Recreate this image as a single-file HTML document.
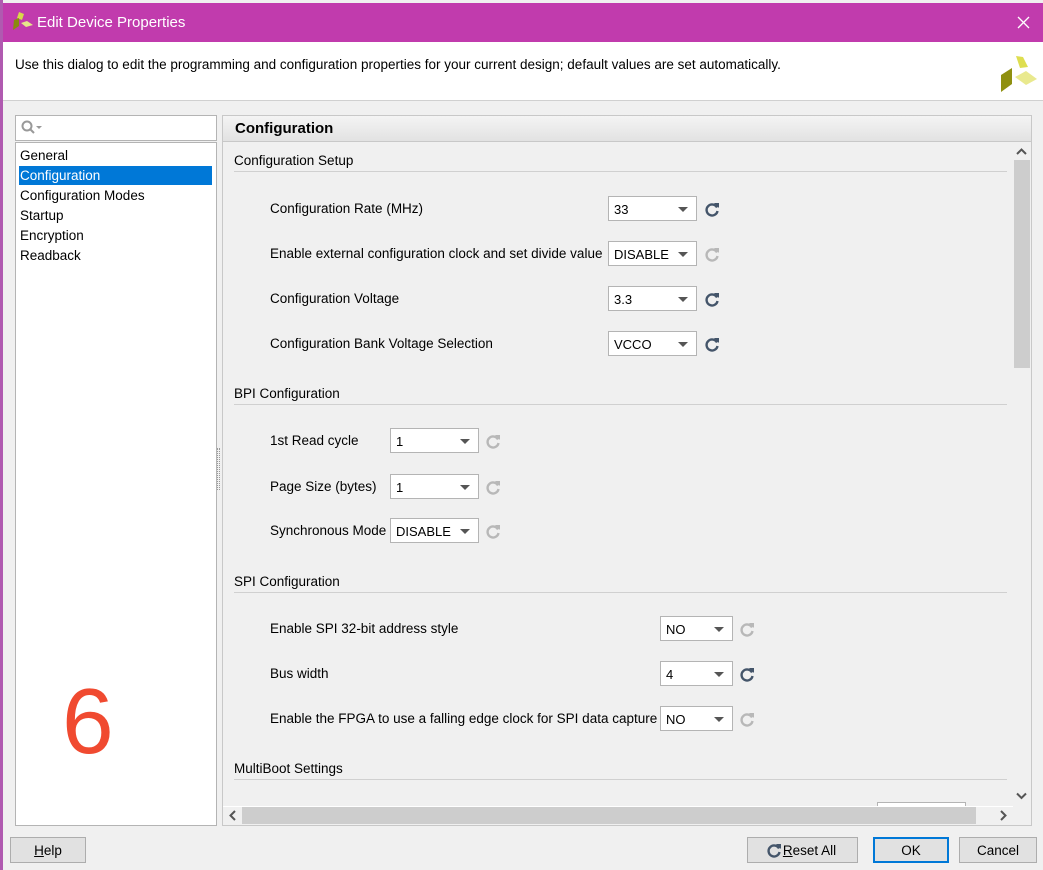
<!DOCTYPE html>
<html><head><meta charset="utf-8"><style>
*{box-sizing:border-box;margin:0;padding:0}
body{width:1043px;height:870px;background:#f0f0f0;font-family:"Liberation Sans","DejaVu Sans",sans-serif;font-size:13.5px;color:#000;position:relative;overflow:hidden}
.a{position:absolute}
.t{position:absolute;white-space:nowrap}
.combo{position:absolute;height:25px;background:#fff;border:1px solid #b4b4b4;font-size:13px;padding:5px 0 0 5px}
.combo:after{content:"";position:absolute;right:8px;top:10px;border-left:5px solid transparent;border-right:5px solid transparent;border-top:5px solid #555}
.sec{position:absolute;left:234px;width:773px;border-bottom:1px solid #d0d0d0;height:19px;font-size:13.5px}
.btn{position:absolute;height:26px;background:#e1e1e1;border:1px solid #adadad;text-align:center;padding-top:5px;font-size:13.5px}
</style></head><body>
<div class="a" style="left:0;top:0;width:3px;height:870px;background:#b05ab0"></div>
<div class="a" style="left:3px;top:3px;width:1040px;height:39px;background:#c13bad"></div>
<svg class="a" style="left:12px;top:12px" width="22" height="20" viewBox="0 0 22 20"><polygon points="7,0 12,2 10,8 5,6" fill="#d8d84a"/><polygon points="2,8 7,6 7,14 1,18" fill="#8a8a10"/><polygon points="9,11 15,9 21,13 14,15" fill="#e6e68a"/></svg>
<div class="t" style="left:37px;top:14px;color:#fff;font-size:15px">Edit Device Properties</div>
<svg class="a" style="left:1017px;top:16px" width="13" height="13"><path d="M1 1L12 12M12 1L1 12" stroke="#fff" stroke-width="1.3"/></svg>
<div class="a" style="left:3px;top:42px;width:1040px;height:59px;background:#fff;border-bottom:1px solid #d0d0d0"></div>
<div class="t" style="left:15px;top:57px">Use this dialog to edit the programming and configuration properties for your current design; default values are set automatically.</div>
<svg class="a" style="left:999px;top:55px" width="40" height="40" viewBox="0 0 40 40"><polygon points="17,1 24,2 29,12 21,13" fill="#dede50"/><polygon points="13,13 13,29 2,37 2,20" fill="#8f9010"/><polygon points="16,22 27,16 38,24 27,30" fill="#e9e98e"/></svg>
<!-- left -->
<div class="a" style="left:15px;top:115px;width:202px;height:26px;background:#fff;border:1px solid #b4b4b4"></div>
<svg class="a" style="left:20px;top:119px" width="24" height="16"><circle cx="7" cy="7" r="4.5" fill="none" stroke="#999" stroke-width="2"/><line x1="10" y1="10" x2="14" y2="14" stroke="#999" stroke-width="2"/><polygon points="16,7 22,7 19,10" fill="#999"/></svg>
<div class="a" style="left:15px;top:142px;width:202px;height:684px;background:#fff;border:1px solid #b4b4b4"></div>
<div class="t" style="left:20px;top:148px">General</div>
<div class="a" style="left:19px;top:166px;width:193px;height:19px;background:#0078d7"></div>
<div class="t" style="left:20px;top:168px;color:#fff">Configuration</div>
<div class="t" style="left:20px;top:188px">Configuration Modes</div>
<div class="t" style="left:20px;top:208px">Startup</div>
<div class="t" style="left:20px;top:228px">Encryption</div>
<div class="t" style="left:20px;top:248px">Readback</div>
<div class="t" style="left:62px;top:675px;color:#f04a30;font-size:93px;line-height:1">6</div>
<div class="a" style="left:217px;top:448px;width:3px;height:42px;border-left:1px dotted #999;border-right:1px dotted #999"></div>
<!-- right -->
<div class="a" style="left:222px;top:115px;width:810px;height:711px;border:1px solid #c8c8c8;background:#f0f0f0"></div>
<div class="a" style="left:223px;top:116px;width:808px;height:26px;background:linear-gradient(#f4f4f4,#e2e2e2);border-bottom:1px solid #c8c8c8"></div>
<div class="t" style="left:235px;top:120px;font-size:15px;font-weight:bold">Configuration</div>
<div class="sec" style="top:153px">Configuration Setup</div>
<div class="t" style="left:270px;top:201px">Configuration Rate (MHz)</div>
<div class="combo" style="left:608px;top:196px;width:89px">33</div>
<div class="t" style="left:270px;top:246px">Enable external configuration clock and set divide value</div>
<div class="combo" style="left:608px;top:241px;width:89px">DISABLE</div>
<div class="t" style="left:270px;top:291px">Configuration Voltage</div>
<div class="combo" style="left:608px;top:286px;width:89px">3.3</div>
<div class="t" style="left:270px;top:336px">Configuration Bank Voltage Selection</div>
<div class="combo" style="left:608px;top:331px;width:89px">VCCO</div>
<div class="sec" style="top:386px">BPI Configuration</div>
<div class="t" style="left:270px;top:433px">1st Read cycle</div>
<div class="combo" style="left:390px;top:428px;width:89px">1</div>
<div class="t" style="left:270px;top:479px">Page Size (bytes)</div>
<div class="combo" style="left:390px;top:474px;width:89px">1</div>
<div class="t" style="left:270px;top:523px">Synchronous Mode</div>
<div class="combo" style="left:390px;top:518px;width:89px">DISABLE</div>
<div class="sec" style="top:574px">SPI Configuration</div>
<div class="t" style="left:270px;top:621px">Enable SPI 32-bit address style</div>
<div class="combo" style="left:660px;top:616px;width:73px">NO</div>
<div class="t" style="left:270px;top:666px">Bus width</div>
<div class="combo" style="left:660px;top:661px;width:73px">4</div>
<div class="t" style="left:270px;top:711px">Enable the FPGA to use a falling edge clock for SPI data capture</div>
<div class="combo" style="left:660px;top:706px;width:73px">NO</div>
<div class="sec" style="top:761px">MultiBoot Settings</div>
<div class="a" style="left:877px;top:802px;width:89px;height:4px;border:1px solid #b4b4b4;border-bottom:none;background:#fff"></div>
<svg width="0" height="0" style="position:absolute"><defs><symbol id="r" viewBox="0 0 16 16"><path d="M13 6.5A5.5 5.5 0 1 0 13.5 10" fill="none" stroke="currentColor" stroke-width="2.4"/><polygon points="10,2 15,2 15,7" fill="currentColor"/></symbol></defs></svg>
<svg class="a" style="left:704px;top:201px;color:#44556a" width="16" height="16"><use href="#r"/></svg>
<svg class="a" style="left:704px;top:246px;color:#b8b8b8" width="16" height="16"><use href="#r"/></svg>
<svg class="a" style="left:704px;top:291px;color:#44556a" width="16" height="16"><use href="#r"/></svg>
<svg class="a" style="left:704px;top:336px;color:#44556a" width="16" height="16"><use href="#r"/></svg>
<svg class="a" style="left:485px;top:433px;color:#b8b8b8" width="16" height="16"><use href="#r"/></svg>
<svg class="a" style="left:485px;top:479px;color:#b8b8b8" width="16" height="16"><use href="#r"/></svg>
<svg class="a" style="left:485px;top:523px;color:#b8b8b8" width="16" height="16"><use href="#r"/></svg>
<svg class="a" style="left:739px;top:621px;color:#b8b8b8" width="16" height="16"><use href="#r"/></svg>
<svg class="a" style="left:739px;top:666px;color:#44556a" width="16" height="16"><use href="#r"/></svg>
<svg class="a" style="left:739px;top:711px;color:#b8b8b8" width="16" height="16"><use href="#r"/></svg>
<!-- scrollbars -->
<div class="a" style="left:1013px;top:143px;width:17px;height:663px;background:#f0f0f0"></div>
<svg class="a" style="left:1016px;top:148px" width="11" height="8"><path d="M1 6L5.5 1.5L10 6" fill="none" stroke="#555" stroke-width="2"/></svg>
<div class="a" style="left:1014px;top:160px;width:16px;height:208px;background:#cdcdcd"></div>
<svg class="a" style="left:1016px;top:792px" width="11" height="8"><path d="M1 1.5L5.5 6L10 1.5" fill="none" stroke="#555" stroke-width="2"/></svg>
<div class="a" style="left:223px;top:806px;width:790px;height:19px;background:#f0f0f0;border-top:1px solid #fff"></div>
<svg class="a" style="left:229px;top:810px" width="8" height="11"><path d="M6 1L1.5 5.5L6 10" fill="none" stroke="#555" stroke-width="2"/></svg>
<div class="a" style="left:242px;top:807px;width:734px;height:17px;background:#cdcdcd"></div>
<svg class="a" style="left:999px;top:810px" width="8" height="11"><path d="M2 1L6.5 5.5L2 10" fill="none" stroke="#555" stroke-width="2"/></svg>
<!-- buttons -->
<div class="btn" style="left:10px;top:837px;width:76px"><u>H</u>elp</div>
<div class="btn" style="left:747px;top:837px;width:111px;padding-left:14px"><u>R</u>eset All</div>
<svg class="a" style="left:766px;top:842px;color:#44556a" width="16" height="16"><use href="#r"/></svg>
<div class="btn" style="left:873px;top:837px;width:76px;border:2px solid #0078d7;padding-top:4px">OK</div>
<div class="btn" style="left:959px;top:837px;width:78px">Cancel</div>
</body></html>
